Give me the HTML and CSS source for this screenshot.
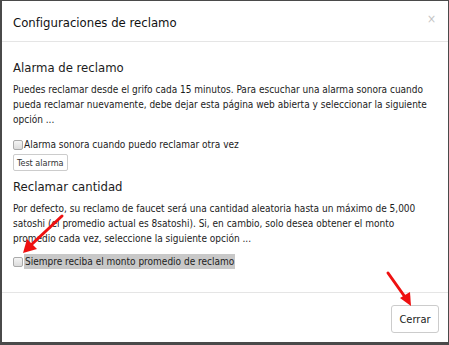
FILE: index.html
```html
<!DOCTYPE html>
<html lang="es">
<head>
<meta charset="utf-8">
<link rel="stylesheet" href="styles.css">
</head>
<body>
<div class="modal">
  <div class="modal-header">
    <h3 class="modal-title">Configuraciones de reclamo</h3>
    <span class="close">×</span>
  </div>
  <div class="modal-body">
    <h4 class="section-title">Alarma de reclamo</h4>
    <p class="text">Puedes reclamar desde el grifo cada 15 minutos. Para escuchar una alarma sonora cuando pueda reclamar nuevamente, debe dejar esta página web abierta y seleccionar la siguiente opción ...</p>
    <label class="check"><span class="box"></span><span>Alarma sonora cuando puedo reclamar otra vez</span></label>
    <button class="btn-small">Test alarma</button>
    <h4 class="section-title second">Reclamar cantidad</h4>
    <p class="text">Por defecto, su reclamo de faucet será una cantidad aleatoria hasta un máximo de 5,000 satoshi (el promedio actual es 8satoshi). Si, en cambio, solo desea obtener el monto promedio cada vez, seleccione la siguiente opción ...</p>
    <label class="check tight"><span class="box"></span><span class="selected">Siempre reciba el monto promedio de reclamo</span></label>
  </div>
  <div class="modal-footer">
    <button class="btn">Cerrar</button>
  </div>
</div>
<svg class="arrows" width="449" height="345" viewBox="0 0 449 345">
  <line x1="62" y1="216" x2="31" y2="245" stroke="#ee1111" stroke-width="3" stroke-linecap="round"/>
  <polygon points="23,253 27,239 37,249" fill="#ee1111"/>
  <line x1="388" y1="273" x2="405" y2="297" stroke="#ee1111" stroke-width="3" stroke-linecap="round"/>
  <polygon points="411,306 400,298 410,292" fill="#ee1111"/>
</svg>
</body>
</html>
```
FILE: styles.css
```css
html, body {
  margin: 0;
  padding: 0;
}
body {
  width: 449px;
  height: 345px;
  background: #4a4a4a;
  position: relative;
  overflow: hidden;
  font-family: "DejaVu Sans Condensed", "DejaVu Sans", sans-serif;
  color: #1c1c1c;
}
.modal {
  margin: 1px 0 0 2px;
  width: 446px;
  height: 341px;
  background: #fff;
  display: flex;
  flex-direction: column;
}
.modal-header {
  height: 41px;
  box-sizing: border-box;
  border-bottom: 1px solid #e5e5e5;
  display: flex;
  align-items: center;
  justify-content: space-between;
  padding: 2px 11px 0;
}
.modal-title {
  margin: 0;
  font-weight: normal;
  font-size: 13px;
  color: #111;
}
.close {
  color: #c4c4c4;
  font-size: 12px;
  margin-top: -6px;
  margin-right: 1px;
}
.modal-body {
  padding: 17px 11px 0;
  height: 251px;
  box-sizing: border-box;
  border-bottom: 1px solid #e5e5e5;
}
.section-title {
  margin: 0;
  font-weight: normal;
  font-size: 13px;
  line-height: 18px;
  color: #1c1c1c;
}
.section-title.second {
  margin-top: 7px;
}
.text {
  margin: 5px 0 0;
  font-size: 10px;
  line-height: 15px;
}
.check {
  display: flex;
  align-items: center;
  font-size: 10px;
  line-height: 15px;
  margin-top: 10px;
}
.check.tight {
  margin-top: 8px;
}
.box {
  width: 8px;
  height: 8px;
  border: 1px solid #aaa;
  border-radius: 2px;
  background: linear-gradient(#f4f4f4, #dcdcdc);
  margin-right: 1px;
}
.selected {
  background: #c8c8c8;
  padding: 0 1px;
}
.btn-small {
  margin-top: 2px;
  display: block;
  height: 17px;
  padding: 0 3px;
  font-family: inherit;
  font-size: 9px;
  color: #333;
  background: #fff;
  border: 1px solid #ccc;
  border-radius: 2px;
}
.modal-footer {
  flex: 1;
  display: flex;
  justify-content: flex-end;
  align-items: flex-start;
  padding: 12px 9px 0 0;
}
.btn {
  width: 48px;
  height: 28px;
  font-family: inherit;
  font-size: 11px;
  color: #222;
  background: #fff;
  border: 1px solid #ccc;
  border-radius: 3px;
}
.arrows {
  position: absolute;
  left: 0;
  top: 0;
}
```
